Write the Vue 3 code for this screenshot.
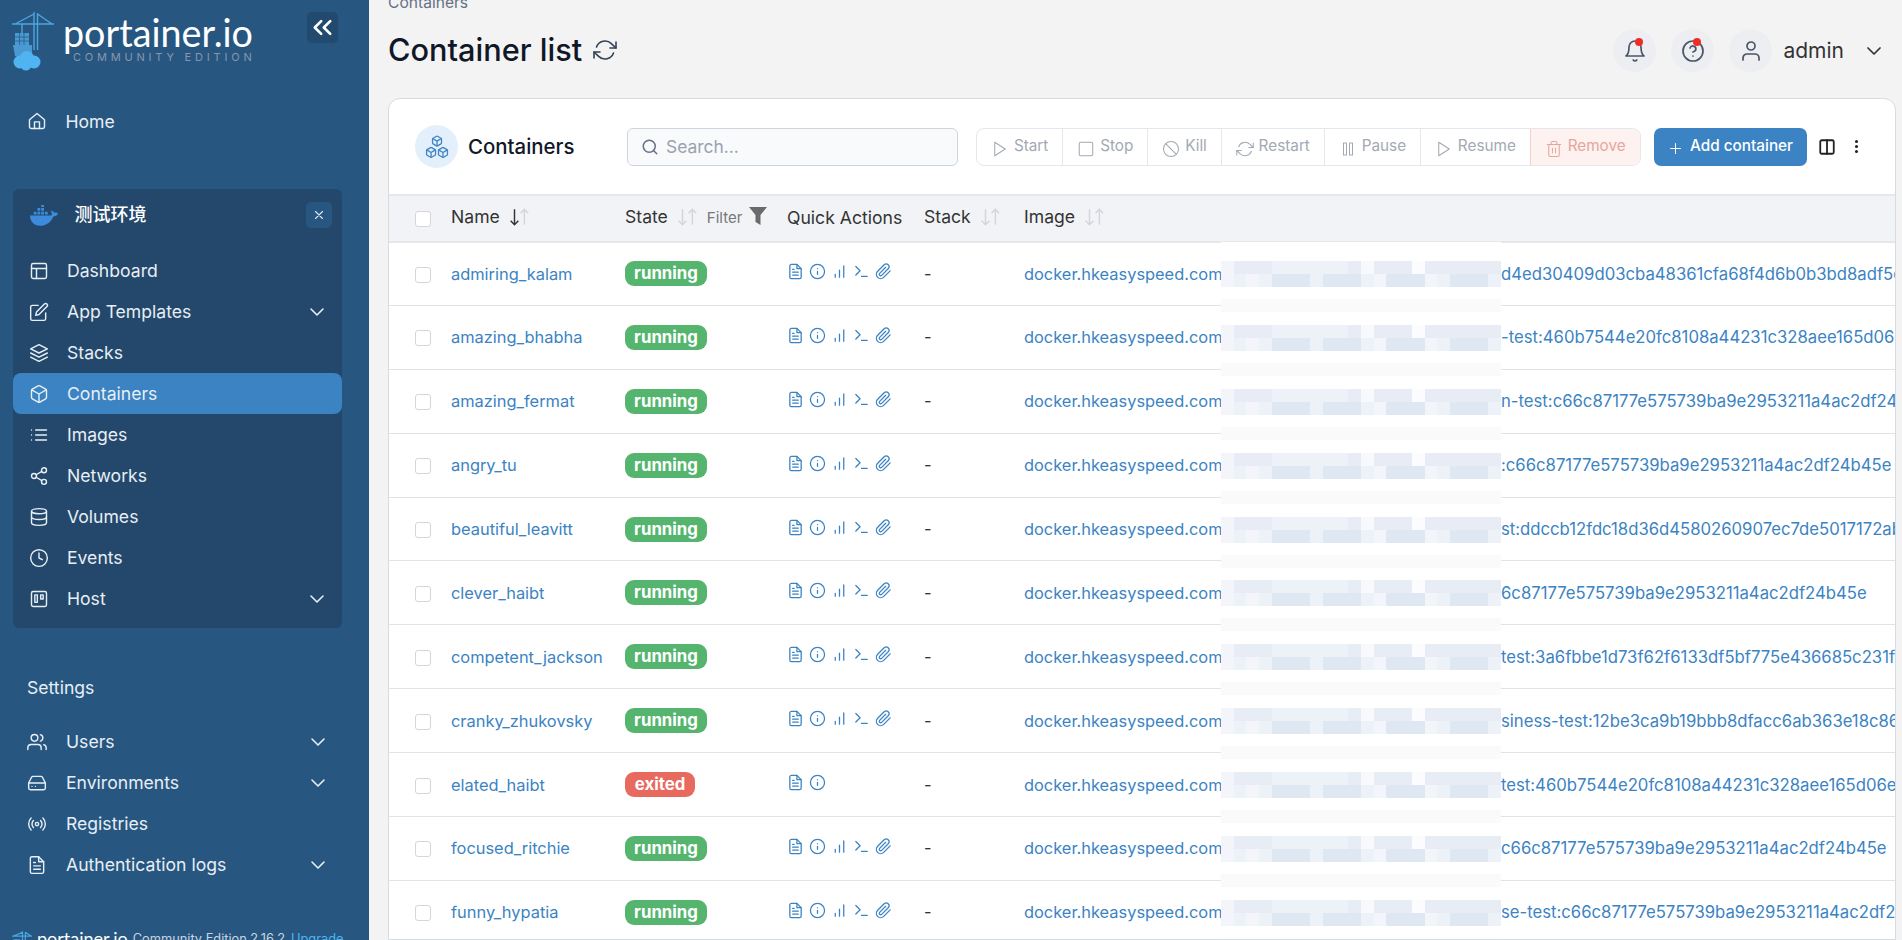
<script setup>
const icons = {
  home: '<path d="M3 10.5 12 3l9 7.5V19a2 2 0 0 1-2 2H5a2 2 0 0 1-2-2z"/><path d="M9 21v-8h6v8"/>',
  layout: '<rect x="3" y="3" width="18" height="18" rx="2"/><path d="M3 9h18M9 21V9"/>',
  edit: '<path d="M11 4H4a2 2 0 0 0-2 2v14a2 2 0 0 0 2 2h14a2 2 0 0 0 2-2v-7"/><path d="M18.5 2.5a2.12 2.12 0 0 1 3 3L12 15l-4 1 1-4z"/>',
  layers: '<path d="M12 2 2 7l10 5 10-5z"/><path d="m2 12 10 5 10-5M2 17l10 5 10-5"/>',
  box: '<path d="M21 16V8a2 2 0 0 0-1-1.73l-7-4a2 2 0 0 0-2 0l-7 4A2 2 0 0 0 3 8v8a2 2 0 0 0 1 1.73l7 4a2 2 0 0 0 2 0l7-4A2 2 0 0 0 21 16z"/><path d="M3.27 6.96 12 12.01l8.73-5.05M12 22.08V12"/>',
  list: '<path d="M8 6h13M8 12h13M8 18h13M3 6h.01M3 12h.01M3 18h.01"/>',
  share: '<circle cx="18" cy="5" r="3"/><circle cx="6" cy="12" r="3"/><circle cx="18" cy="19" r="3"/><path d="m8.59 13.51 6.83 3.98M15.41 6.51l-6.82 3.98"/>',
  database: '<ellipse cx="12" cy="5" rx="9" ry="3"/><path d="M21 12c0 1.66-4 3-9 3s-9-1.34-9-3"/><path d="M3 5v14c0 1.66 4 3 9 3s9-1.34 9-3V5"/>',
  clock: '<circle cx="12" cy="12" r="10"/><path d="M12 6v6l4 2"/>',
  trello: '<rect x="3" y="3" width="18" height="18" rx="2"/><rect x="7" y="7" width="3" height="9"/><rect x="14" y="7" width="3" height="5"/>',
  users: '<path d="M17 21v-2a4 4 0 0 0-4-4H5a4 4 0 0 0-4 4v2"/><circle cx="9" cy="7" r="4"/><path d="M23 21v-2a4 4 0 0 0-3-3.87M16 3.13a4 4 0 0 1 0 7.75"/>',
  drive: '<path d="M22 12H2"/><path d="M5.45 5.11 2 12v6a2 2 0 0 0 2 2h16a2 2 0 0 0 2-2v-6l-3.45-6.89A2 2 0 0 0 16.76 4H7.24a2 2 0 0 0-1.79 1.11z"/><path d="M6 16h.01M10 16h.01"/>',
  radio: '<circle cx="12" cy="12" r="2"/><path d="M16.24 7.76a6 6 0 0 1 0 8.49m-8.48-.01a6 6 0 0 1 0-8.49m11.31-2.82a10 10 0 0 1 0 14.14m-14.14 0a10 10 0 0 1 0-14.14"/>',
  file: '<path d="M14 2H6a2 2 0 0 0-2 2v16a2 2 0 0 0 2 2h12a2 2 0 0 0 2-2V8z"/><path d="M14 2v6h6M16 13H8M16 17H8M10 9H8"/>',
  info: '<circle cx="12" cy="12" r="10"/><path d="M12 16v-4M12 8h.01"/>',
  chart: '<path d="M12 20V10M18 20V4M6 20v-4"/>',
  terminal: '<path d="m4 17 6-6-6-6M12 19h8"/>',
  clip: '<path d="m21.44 11.05-9.19 9.19a6 6 0 0 1-8.49-8.49l9.19-9.19a4 4 0 0 1 5.66 5.66l-9.2 9.19a2 2 0 0 1-2.83-2.83l8.49-8.48"/>',
  play: '<path d="M5 3l14 9-14 9z"/>',
  square: '<rect x="3" y="3" width="18" height="18" rx="2"/>',
  slash: '<circle cx="12" cy="12" r="10"/><path d="M4.93 4.93l14.14 14.14"/>',
  refresh: '<path d="M23 4v6h-6M1 20v-6h6"/><path d="M3.51 9a9 9 0 0 1 14.85-3.36L23 10M1 14l4.64 4.36A9 9 0 0 0 20.49 15"/>',
  pause: '<rect x="6" y="4" width="4" height="16"/><rect x="14" y="4" width="4" height="16"/>',
  trash: '<path d="M3 6h18"/><path d="M19 6v14a2 2 0 0 1-2 2H7a2 2 0 0 1-2-2V6m3 0V4a2 2 0 0 1 2-2h4a2 2 0 0 1 2 2v2M10 11v6M14 11v6"/>',
  plus: '<path d="M12 5v14M5 12h14"/>',
  columns: '<rect x="3" y="3" width="18" height="18" rx="2"/><path d="M12 3v18"/>',
  bell: '<path d="M18 8A6 6 0 0 0 6 8c0 7-3 9-3 9h18s-3-2-3-9"/><path d="M13.73 21a2 2 0 0 1-3.46 0"/>',
  help: '<circle cx="12" cy="12" r="10"/><path d="M9.09 9a3 3 0 0 1 5.83 1c0 2-3 3-3 3M12 17h.01"/>',
  user: '<path d="M20 21v-2a4 4 0 0 0-4-4H8a4 4 0 0 0-4 4v2"/><circle cx="12" cy="7" r="4"/>',
  search: '<circle cx="11" cy="11" r="8"/><path d="m21 21-4.35-4.35"/>',
  chevron: '<path d="m6 9 6 6 6-6"/>',
  close: '<path d="M18 6 6 18M6 6l12 12"/>',
  collapse: '<path d="m11 17-5-5 5-5M18 17l-5-5 5-5"/>'
}

const envItems = [
  { label: 'Dashboard', icon: 'layout' },
  { label: 'App Templates', icon: 'edit', more: true },
  { label: 'Stacks', icon: 'layers' },
  { label: 'Containers', icon: 'box', active: true },
  { label: 'Images', icon: 'list' },
  { label: 'Networks', icon: 'share' },
  { label: 'Volumes', icon: 'database' },
  { label: 'Events', icon: 'clock' },
  { label: 'Host', icon: 'trello', more: true }
]

const settingsItems = [
  { label: 'Users', icon: 'users', more: true },
  { label: 'Environments', icon: 'drive', more: true },
  { label: 'Registries', icon: 'radio' },
  { label: 'Authentication logs', icon: 'file', more: true }
]

const actions = [
  { label: 'Start', icon: 'play' },
  { label: 'Stop', icon: 'square' },
  { label: 'Kill', icon: 'slash' },
  { label: 'Restart', icon: 'refresh' },
  { label: 'Pause', icon: 'pause' },
  { label: 'Resume', icon: 'play' },
  { label: 'Remove', icon: 'trash', danger: true }
]

const rows = [
  { name: 'admiring_kalam', state: 'running', tail: 'd4ed30409d03cba48361cfa68f4d6b0b3bd8adf5e1f0' },
  { name: 'amazing_bhabha', state: 'running', tail: '-test:460b7544e20fc8108a44231c328aee165d06e' },
  { name: 'amazing_fermat', state: 'running', tail: 'n-test:c66c87177e575739ba9e2953211a4ac2df24b45e' },
  { name: 'angry_tu', state: 'running', tail: ':c66c87177e575739ba9e2953211a4ac2df24b45e' },
  { name: 'beautiful_leavitt', state: 'running', tail: 'st:ddccb12fdc18d36d4580260907ec7de5017172ab' },
  { name: 'clever_haibt', state: 'running', tail: '6c87177e575739ba9e2953211a4ac2df24b45e' },
  { name: 'competent_jackson', state: 'running', tail: 'test:3a6fbbe1d73f62f6133df5bf775e436685c231f' },
  { name: 'cranky_zhukovsky', state: 'running', tail: 'siness-test:12be3ca9b19bbb8dfacc6ab363e18c86' },
  { name: 'elated_haibt', state: 'exited', tail: 'test:460b7544e20fc8108a44231c328aee165d06e' },
  { name: 'focused_ritchie', state: 'running', tail: 'c66c87177e575739ba9e2953211a4ac2df24b45e' },
  { name: 'funny_hypatia', state: 'running', tail: 'se-test:c66c87177e575739ba9e2953211a4ac2df24b45e' }
]

// mosaic over the redacted part of the image names
const topShades = [3, 1, 1, 1, 2, 2, 2, 2, 2, 2, 1, 4, 1, 1, 1, 5, 1, 1, 1, 1, 1, 1]
const bottomShades = [3, 2, 3, 2, 0, 0, 0, 2, 0, 0, 0, 2, 3, 0, 0, 0, 3, 2, 0, 0, 0, 2]
const palette = ['#dfe7f2', '#e7ecf5', '#edf1f8', '#f3f5fa', '#f8f9fc', '#fcfcfe']
const mosaic = [...topShades, ...bottomShades].map((s) => palette[s])
</script>

<template>
  <div class="page">
    <aside class="sidebar">
      <div class="brand">
        <svg class="brand-mark" viewBox="0 0 42 60" fill="none">
          <path d="M0 12h42M22 0v38M25.5 1v37M22 2 3 12M25.5 2 40 12M10 12v9" stroke="#4ba6df" stroke-width="1.4"/>
          <path d="M3 21h14v13H3z" fill="#4a9ad2"/>
          <path d="M3 25h14M3 29h14M7.500 21v13M12 21v13" stroke="#275781" stroke-width=".7"/>
          <path d="M1 33h19v9l-9 5-8-3z" fill="#4a9ad2"/>
          <g fill="#4fb4f1">
            <circle cx="8" cy="50" r="6.500"/>
            <circle cx="15" cy="46" r="7"/>
            <circle cx="22" cy="50" r="6.500"/>
            <circle cx="14" cy="53" r="5.500"/>
          </g>
        </svg>
        <div class="brand-text">
          <div class="brand-name">portainer.io</div>
          <div class="brand-edition">COMMUNITY EDITION</div>
        </div>
        <button type="button" class="collapse-btn">
          <svg viewBox="0 0 24 24" class="ico" v-html="icons.collapse"></svg>
        </button>
      </div>

      <a class="nav-item home-item">
        <svg viewBox="0 0 24 24" class="ico nav-ico" v-html="icons.home"></svg>
        <span>Home</span>
      </a>

      <section class="env-panel">
        <div class="env-head">
          <svg class="whale" viewBox="0 0 30 22" fill="#3d8bdc">
            <path d="M0 11h23c1-2 0-4-1-5 2-.5 3 .5 4 2 2-.5 3 0 4 1-1 2-3 3-5 3-2 6-8 10-14 10-7 0-11-5-11-11z"/>
            <path d="M4 7h3v3H4zM8 7h3v3H8zM12 7h3v3h-3zM16 7h3v3h-3zM8 3h3v3H8zM12 3h3v3h-3zM12-1h3v3h-3z"/>
          </svg>
          <span class="env-name">测试环境</span>
          <button type="button" class="env-close">
            <svg viewBox="0 0 24 24" class="ico" v-html="icons.close"></svg>
          </button>
        </div>
        <a v-for="item in envItems" :key="item.label" class="nav-item" :class="{ active: item.active }">
          <svg viewBox="0 0 24 24" class="ico nav-ico" v-html="icons[item.icon]"></svg>
          <span>{{ item.label }}</span>
          <svg v-if="item.more" viewBox="0 0 24 24" class="ico nav-more" v-html="icons.chevron"></svg>
        </a>
      </section>

      <div class="settings-label">Settings</div>
      <a v-for="item in settingsItems" :key="item.label" class="nav-item settings-item">
        <svg viewBox="0 0 24 24" class="ico nav-ico" v-html="icons[item.icon]"></svg>
        <span>{{ item.label }}</span>
        <svg v-if="item.more" viewBox="0 0 24 24" class="ico nav-more" v-html="icons.chevron"></svg>
      </a>

      <div class="side-footer">
        <svg class="footer-mark" viewBox="0 0 42 30" fill="none">
          <path d="M0 10h42M22 0v30M28 2v28M22 2 3 10M28 2l12 8" stroke="#4ba6df" stroke-width="2.5"/>
          <path d="M3 16h14v14H3z" fill="#3f8fc9"/>
        </svg>
        <span class="footer-name">portainer.io</span>
        <span class="footer-edition">Community Edition 2.16.2</span>
        <a class="footer-link">Upgrade</a>
      </div>
    </aside>

    <main class="main">
      <header class="topbar">
        <div class="heading">
          <div class="crumb">Containers</div>
          <h1>
            Container list
            <svg viewBox="0 0 24 24" class="ico title-refresh" v-html="icons.refresh"></svg>
          </h1>
        </div>
        <div class="top-actions">
          <span class="round-btn">
            <svg viewBox="0 0 24 24" class="ico" v-html="icons.bell"></svg>
            <i class="dot"></i>
          </span>
          <span class="round-btn">
            <svg viewBox="0 0 24 24" class="ico" v-html="icons.help"></svg>
            <i class="dot"></i>
          </span>
          <span class="round-btn">
            <svg viewBox="0 0 24 24" class="ico" v-html="icons.user"></svg>
          </span>
          <span class="username">admin</span>
          <svg viewBox="0 0 24 24" class="ico user-chevron" v-html="icons.chevron"></svg>
        </div>
      </header>

      <section class="card">
        <div class="card-head">
          <div class="card-title">
            <span class="title-badge">
              <svg viewBox="0 0 24 24" fill="none">
                <g v-for="pos in ['translate(6.5 1) scale(.46)', 'translate(1 11.5) scale(.46)', 'translate(12 11.5) scale(.46)']" :key="pos" :transform="pos" v-html="icons.box"></g>
              </svg>
            </span>
            Containers
          </div>
          <label class="search">
            <svg viewBox="0 0 24 24" class="ico" v-html="icons.search"></svg>
            <span>Search...</span>
          </label>
          <div class="btn-group">
            <button v-for="a in actions" :key="a.label" type="button" class="group-btn" :class="{ danger: a.danger }">
              <svg viewBox="0 0 24 24" class="ico" v-html="icons[a.icon]"></svg>
              <span class="btn-label">{{ a.label }}</span>
            </button>
          </div>
          <button type="button" class="add-btn">
            <svg viewBox="0 0 24 24" class="ico" v-html="icons.plus"></svg>
            <span class="btn-label">Add container</span>
          </button>
          <svg viewBox="0 0 24 24" class="ico columns-ico" v-html="icons.columns"></svg>
          <span class="more-dots"><i></i><i></i><i></i></span>
        </div>

        <div class="table-wrap">
          <table>
            <colgroup>
              <col class="c-check" />
              <col class="c-name" />
              <col class="c-state" />
              <col class="c-quick" />
              <col class="c-stack" />
              <col />
            </colgroup>
            <thead>
              <tr>
                <th><span class="checkbox"></span></th>
                <th>
                  Name
                  <svg class="sort" viewBox="0 0 20 20"><path class="on" d="M5 3v14M1.500 13.500 5 17l3.500-3.500"/><path d="M14 17V3M10.500 6.500 14 3l3.500 3.500"/></svg>
                </th>
                <th>
                  State
                  <svg class="sort" viewBox="0 0 20 20"><path d="M5 3v14M1.500 13.500 5 17l3.500-3.500"/><path d="M14 17V3M10.500 6.500 14 3l3.500 3.500"/></svg>
                  <span class="filter">Filter</span>
                  <svg class="funnel" viewBox="0 0 18 18"><path d="M0 0h18l-6.500 8v10l-5-3V8z" fill="#6b6b6b"/></svg>
                </th>
                <th>Quick Actions</th>
                <th>
                  Stack
                  <svg class="sort" viewBox="0 0 20 20"><path d="M5 3v14M1.500 13.500 5 17l3.500-3.500"/><path d="M14 17V3M10.500 6.500 14 3l3.500 3.500"/></svg>
                </th>
                <th>
                  Image
                  <svg class="sort" viewBox="0 0 20 20"><path d="M5 3v14M1.500 13.500 5 17l3.500-3.500"/><path d="M14 17V3M10.500 6.500 14 3l3.500 3.500"/></svg>
                </th>
              </tr>
            </thead>
            <tbody>
              <tr v-for="row in rows" :key="row.name">
                <td><span class="checkbox"></span></td>
                <td><a class="link">{{ row.name }}</a></td>
                <td><span class="badge" :class="row.state">{{ row.state }}</span></td>
                <td>
                  <span class="quick">
                    <svg viewBox="0 0 24 24" class="ico" v-html="icons.file"></svg>
                    <svg viewBox="0 0 24 24" class="ico" v-html="icons.info"></svg>
                    <template v-if="row.state === 'running'">
                      <svg viewBox="0 0 24 24" class="ico" v-html="icons.chart"></svg>
                      <svg viewBox="0 0 24 24" class="ico" v-html="icons.terminal"></svg>
                      <svg viewBox="0 0 24 24" class="ico" v-html="icons.clip"></svg>
                    </template>
                  </span>
                </td>
                <td class="stack-cell">-</td>
                <td class="image-cell"><span class="image-host link">docker.hkeasyspeed.com</span><span class="image-tail link">{{ row.tail }}</span></td>
              </tr>
            </tbody>
          </table>

          <div class="redact">
            <div v-for="row in rows" :key="row.name" class="redact-row">
              <div class="mosaic">
                <i v-for="(color, i) in mosaic" :key="i" :style="{ background: color }"></i>
              </div>
              <div class="pale"></div>
            </div>
          </div>
        </div>
      </section>
    </main>
  </div>
</template>

<style>
html,
body {
  margin: 0;
  height: 100%;
  overflow: hidden;
}
</style>

<style scoped>
.page {
  display: flex;
  height: 940px;
  overflow: hidden;
  background: #f3f3f4;
  font-family: Inter, "Noto Sans CJK SC", sans-serif;
  color: #344054;
}

.ico {
  display: block;
  fill: none;
  stroke: currentColor;
  stroke-width: 2;
  stroke-linecap: round;
  stroke-linejoin: round;
  flex: none;
}

/* sidebar */
.sidebar {
  width: 369px;
  flex: none;
  display: flex;
  flex-direction: column;
  background: #275781;
  color: #e8eef5;
  font-size: 17.6px;
}

.brand {
  height: 100.5px;
  flex: none;
  display: flex;
  align-items: flex-start;
  padding: 12px 31px 0 12px;
  box-sizing: border-box;
}

.brand-mark {
  width: 42px;
  height: 60px;
  flex: none;
}

.brand-text {
  margin-left: 9px;
  flex: 1;
  color: #fff;
}

.brand-name {
  font-family: Lato, sans-serif;
  font-size: 37.7px;
  line-height: 36px;
  margin-top: 3px;
}

.brand-edition {
  margin: -1px 0 0 10px;
  font-size: 11px;
  line-height: 14px;
  letter-spacing: 3.8px;
  color: #8796a9;
  white-space: nowrap;
}

.collapse-btn {
  width: 31px;
  height: 31px;
  padding: 0;
  border: 0;
  border-radius: 5px;
  background: #224a6e;
  color: #fff;
}

.nav-item {
  height: 41px;
  flex: none;
  display: flex;
  align-items: center;
  padding: 0 18px 0 15.5px;
  border-radius: 8px;
  box-sizing: border-box;
}

.nav-ico {
  width: 20px;
  height: 20px;
  margin-right: 18.5px;
  stroke-width: 1.7;
}

.nav-more {
  width: 24px;
  height: 24px;
  margin-left: auto;
  margin-right: -5px;
  stroke-width: 1.6;
}

.home-item {
  padding-left: 27px;
}

.env-panel {
  margin: 47px 27px 0 13px;
  padding-bottom: 9px;
  border-radius: 6px;
  background: #23486b;
}

.env-head {
  height: 61.5px;
  display: flex;
  align-items: flex-start;
  padding: 13px 10px 0 17px;
  box-sizing: border-box;
}

.whale {
  width: 28px;
  height: 21px;
  margin-top: 3px;
}

.env-name {
  margin: 0 0 0 16.5px;
  flex: 1;
  font-size: 18px;
  font-weight: 500;
  line-height: 26px;
  color: #fff;
}

.env-close {
  width: 26px;
  height: 26px;
  padding: 6px;
  border: 0;
  border-radius: 5px;
  background: #275781;
  color: #d9e3ee;
}

.nav-item.active {
  background: #3b83c3;
}

.settings-label {
  margin: 40px 0 13px 27px;
  line-height: 40px;
}

.settings-item {
  padding-left: 27px;
  padding-right: 44px;
}

.settings-item .nav-ico {
  margin-right: 19px;
}

.side-footer {
  margin-top: 42px;
  padding-left: 12px;
  display: flex;
  align-items: center;
  white-space: nowrap;
  font-size: 12.8px;
  color: #c8d4e0;
}

.footer-mark {
  width: 20px;
  height: 15px;
  margin-right: 5px;
  flex: none;
}

.footer-name {
  font-family: Lato, sans-serif;
  font-size: 18px;
  color: #fff;
  margin-right: 5px;
}

.footer-edition {
  margin-right: 6px;
}

.footer-link {
  color: #4fb4f1;
}

/* main */
.main {
  flex: 1;
  min-width: 0;
  padding: 0 6px 0 19px;
  display: flex;
  flex-direction: column;
}

.topbar {
  height: 98px;
  flex: none;
  display: flex;
  justify-content: space-between;
  align-items: flex-start;
}

.crumb {
  margin-top: -5px;
  font-size: 15.6px;
  line-height: 16px;
  color: #667085;
}

h1 {
  display: flex;
  align-items: center;
  margin: 21px 0 0;
  gap: 11px;
  font-size: 30.7px;
  line-height: 36px;
  font-weight: 500;
  color: #101828;
}

.title-refresh {
  width: 24px;
  height: 24px;
  stroke-width: 1.6;
  color: #344054;
}

.top-actions {
  display: flex;
  align-items: center;
  margin-top: 29px;
  margin-right: 10px;
}

.round-btn {
  position: relative;
  width: 43px;
  height: 43px;
  margin-right: 15px;
  display: flex;
  align-items: center;
  justify-content: center;
  border-radius: 50%;
  background: #eceef2;
  color: #4a5568;
}

.round-btn .ico {
  width: 24px;
  height: 24px;
  stroke-width: 1.7;
}

.dot {
  position: absolute;
  top: 9px;
  right: 13px;
  width: 8px;
  height: 8px;
  border-radius: 50%;
  background: #f02d25;
}

.username {
  margin-left: -4px;
  font-size: 21px;
  color: #333;
}

.user-chevron {
  width: 24px;
  height: 24px;
  margin-left: 18px;
  stroke-width: 1.7;
  color: #333;
}

.card {
  flex: 1;
  min-height: 0;
  overflow: hidden;
  border: 1px solid #d6dce3;
  border-radius: 12px 12px 0 0;
  background: #fff;
}

.card-head {
  height: 95px;
  display: flex;
  align-items: center;
  padding-left: 26px;
  box-sizing: border-box;
}

.card-title {
  width: 212px;
  flex: none;
  display: flex;
  align-items: center;
  gap: 10px;
  font-size: 20.4px;
  font-weight: 500;
  color: #101828;
}

.title-badge {
  width: 43px;
  height: 43px;
  display: flex;
  align-items: center;
  justify-content: center;
  border-radius: 50%;
  background: #e3f0fb;
}

.title-badge svg {
  width: 26px;
  height: 26px;
  stroke: #3f84c5;
  stroke-width: 2.6;
  stroke-linejoin: round;
}

.search {
  width: 331px;
  height: 38px;
  flex: none;
  display: flex;
  align-items: center;
  gap: 7px;
  padding-left: 13px;
  box-sizing: border-box;
  border: 1px solid #cfd5dd;
  border-radius: 6px;
  background: #f9fafb;
  font-size: 17.4px;
  color: #98a2b3;
}

.search .ico {
  width: 18px;
  height: 18px;
  color: #667085;
}

.btn-group {
  height: 38px;
  margin-left: 18px;
  flex: none;
  display: flex;
  box-sizing: border-box;
  border: 1px solid #e4e7ec;
  border-radius: 8px;
}

.group-btn {
  display: flex;
  align-items: center;
  gap: 5px;
  padding: 0 13.9px;
  border: 0;
  border-left: 1px solid #e4e7ec;
  background: none;
  font: inherit;
  font-size: 15.3px;
  color: #a3a9b3;
}

.group-btn:first-child {
  border-left: 0;
  border-radius: 8px 0 0 8px;
}

.group-btn .ico {
  width: 18px;
  height: 18px;
  margin-top: 4px;
  stroke-width: 1.4;
}

.btn-label {
  margin-top: -2px;
}

.group-btn.danger {
  border-left-color: #f3cfca;
  border-radius: 0 8px 8px 0;
  background: #fdf2f0;
  color: #e8a59c;
}

.add-btn {
  width: 153px;
  height: 38px;
  margin-left: 13px;
  flex: none;
  display: flex;
  align-items: center;
  justify-content: center;
  gap: 6px;
  padding: 0;
  border: 0;
  border-radius: 7px;
  background: #3b83c3;
  font: inherit;
  font-size: 15.3px;
  font-weight: 500;
  color: #fff;
}

.add-btn .ico {
  width: 17px;
  height: 17px;
  margin-top: 3px;
  stroke-width: 1.5;
}

.columns-ico {
  width: 18px;
  height: 18px;
  margin-left: 11px;
  color: #222;
  stroke-width: 2.4;
}

.more-dots {
  margin-left: 19px;
  display: flex;
  flex-direction: column;
  gap: 2px;
}

.more-dots i {
  width: 3px;
  height: 3px;
  border-radius: 50%;
  background: #222;
}

/* table */
.table-wrap {
  position: relative;
  overflow: hidden;
}

table {
  width: 100%;
  table-layout: fixed;
  border-collapse: collapse;
  font-size: 16.4px;
  white-space: nowrap;
}

.c-check {
  width: 62px;
}

.c-name {
  width: 174px;
}

.c-state {
  width: 162px;
}

.c-quick {
  width: 137px;
}

.c-stack {
  width: 100px;
}

th,
td {
  padding: 0;
  text-align: left;
  font-weight: 400;
}

th {
  padding-bottom: 2px;
}

thead tr {
  height: 46.5px;
  background: #f2f3f7;
  color: #333;
  font-size: 17.6px;
  border-top: 2px solid #e6e7ea;
  border-bottom: 2px solid #e6e7ea;
}

tbody tr {
  height: 63.9px;
  border-bottom: 1px solid #e2e3e6;
}

th:first-child,
td:first-child {
  padding-left: 26px;
}

.checkbox {
  display: block;
  width: 14px;
  height: 14px;
  margin-top: 2px;
  border: 1px solid #d4d6da;
  border-radius: 3px;
  background: #fff;
}

th .checkbox {
  margin-top: 4px;
}

.sort {
  width: 22px;
  height: 22px;
  margin-left: 4px;
  vertical-align: -5px;
  fill: none;
  stroke: #d3d5da;
  stroke-width: 1.3;
}

.sort .on {
  stroke: #333;
}

.filter {
  margin-left: 8px;
  font-size: 15px;
  color: #777;
}

.funnel {
  width: 18px;
  height: 18px;
  margin-left: 7px;
  vertical-align: -2px;
}

.link {
  color: #3b83c3;
}

.image-tail {
  font-size: 16.7px;
}

.badge {
  display: inline-block;
  width: 82px;
  height: 25px;
  line-height: 25px;
  text-align: center;
  border-radius: 9px;
  font-size: 16.8px;
  font-weight: 700;
  color: #fff;
}

.badge.running {
  background: #55b56f;
}

.badge.exited {
  width: 70px;
  background: #e86a5f;
}

.quick {
  display: flex;
  margin: -4px 0 0;
  gap: 5px;
  color: #3b83c3;
}

.quick .ico {
  width: 17px;
  height: 17px;
  stroke-width: 1.8;
}

.stack-cell {
  color: #333;
}

.image-host {
  display: inline-block;
  width: 477px;
}

.redact {
  position: absolute;
  top: 48px;
  bottom: 0;
  left: 832px;
  width: 280px;
  background: #fff;
  overflow: hidden;
}

.redact-row {
  height: 63.9px;
  padding-top: 19px;
  box-sizing: border-box;
}

.mosaic {
  display: grid;
  grid-template-columns: repeat(22, 1fr);
  grid-auto-rows: 13px;
}

.pale {
  height: 13px;
  margin-top: 12px;
  background: #fafafa;
}
</style>
